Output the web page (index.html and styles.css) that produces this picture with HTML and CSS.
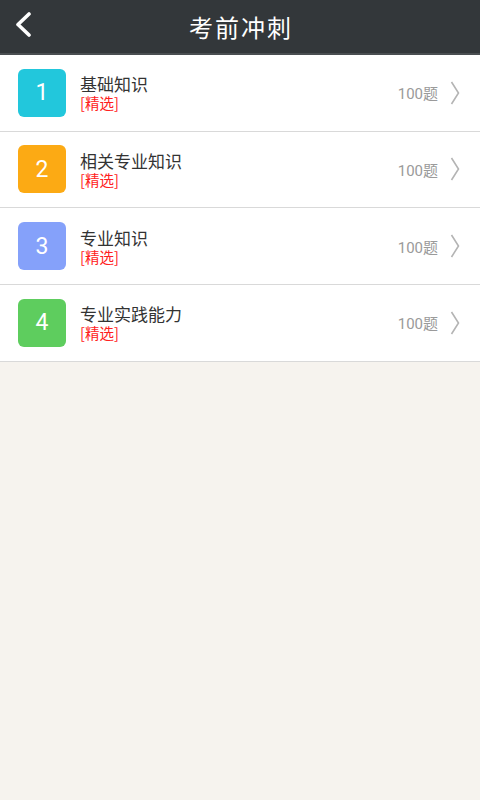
FILE: index.html
```html
<!DOCTYPE html>
<html lang="zh">
<head>
<meta charset="utf-8">
<link rel="stylesheet" href="styles.css">
</head>
<body>
<header class="bar">
  <svg class="back" viewBox="0 0 20 26" width="20" height="26"><polyline points="15,3 4,13.5 15,24" fill="none" stroke="#fff" stroke-width="3.6" stroke-linecap="round" stroke-linejoin="round"/></svg>
  <h1 class="title">考前冲刺</h1>
</header>
<ul class="list">
  <li class="row">
    <div class="badge c1">1</div>
    <div class="info"><div class="name">基础知识</div><div class="tag">[精选]</div></div>
    <div class="count">100题</div>
    <svg class="chev" viewBox="0 0 10 24" width="10" height="24"><polyline points="1.5,1 8.5,12 1.5,23" fill="none" stroke="#b4b4b4" stroke-width="1.6"/></svg>
  </li>
  <li class="row">
    <div class="badge c2">2</div>
    <div class="info"><div class="name">相关专业知识</div><div class="tag">[精选]</div></div>
    <div class="count">100题</div>
    <svg class="chev" viewBox="0 0 10 24" width="10" height="24"><polyline points="1.5,1 8.5,12 1.5,23" fill="none" stroke="#b4b4b4" stroke-width="1.6"/></svg>
  </li>
  <li class="row">
    <div class="badge c3">3</div>
    <div class="info"><div class="name">专业知识</div><div class="tag">[精选]</div></div>
    <div class="count">100题</div>
    <svg class="chev" viewBox="0 0 10 24" width="10" height="24"><polyline points="1.5,1 8.5,12 1.5,23" fill="none" stroke="#b4b4b4" stroke-width="1.6"/></svg>
  </li>
  <li class="row">
    <div class="badge c4">4</div>
    <div class="info"><div class="name">专业实践能力</div><div class="tag">[精选]</div></div>
    <div class="count">100题</div>
    <svg class="chev" viewBox="0 0 10 24" width="10" height="24"><polyline points="1.5,1 8.5,12 1.5,23" fill="none" stroke="#b4b4b4" stroke-width="1.6"/></svg>
  </li>
</ul>
</body>
</html>
```
FILE: styles.css
```css
html, body {
  margin: 0;
  padding: 0;
  background: #f6f3ee;
  font-family: "Noto Sans CJK SC", "Noto Sans", sans-serif;
  width: 480px;
  height: 800px;
}
.bar {
  height: 53px;
  background: #33373a;
  border-bottom: 2px solid #4a4e51;
  display: flex;
  align-items: center;
  justify-content: center;
  position: relative;
}
.back {
  position: absolute;
  left: 14px;
  top: 11px;
}
.title {
  margin: 0 0 0 2px;
  color: #ffffff;
  font-size: 24px;
  font-weight: normal;
  letter-spacing: 2px;
  line-height: 53px;
}
.list {
  list-style: none;
  margin: 0;
  padding: 0;
  background: #fff;
}
.row {
  height: 75.67px;
  border-bottom: 1px solid #d9d9d9;
  display: flex;
  align-items: center;
  padding: 0 20px 0 18px;
}
.badge {
  width: 48px;
  height: 48px;
  border-radius: 6px;
  color: #fff;
  font-family: "Roboto", "Noto Sans", sans-serif;
  font-size: 23px;
  display: flex;
  align-items: center;
  justify-content: center;
  margin-right: 14px;
}
.c1 { background: #22c7dc; }
.c2 { background: #fcaa14; }
.c3 { background: #85a1fa; }
.c4 { background: #5ecd5e; }
.info {
  flex: 1;
  display: flex;
  flex-direction: column;
}
.name {
  font-size: 17px;
  color: #333;
  line-height: 21px;
}
.tag {
  font-size: 14.5px;
  color: #ff2020;
  line-height: 18px;
}
.count {
  font-family: "Roboto", "Noto Sans CJK SC", sans-serif;
  font-size: 15px;
  color: #9a9a9a;
  margin-right: 12px;
}
.chev {
  display: block;
}
```
